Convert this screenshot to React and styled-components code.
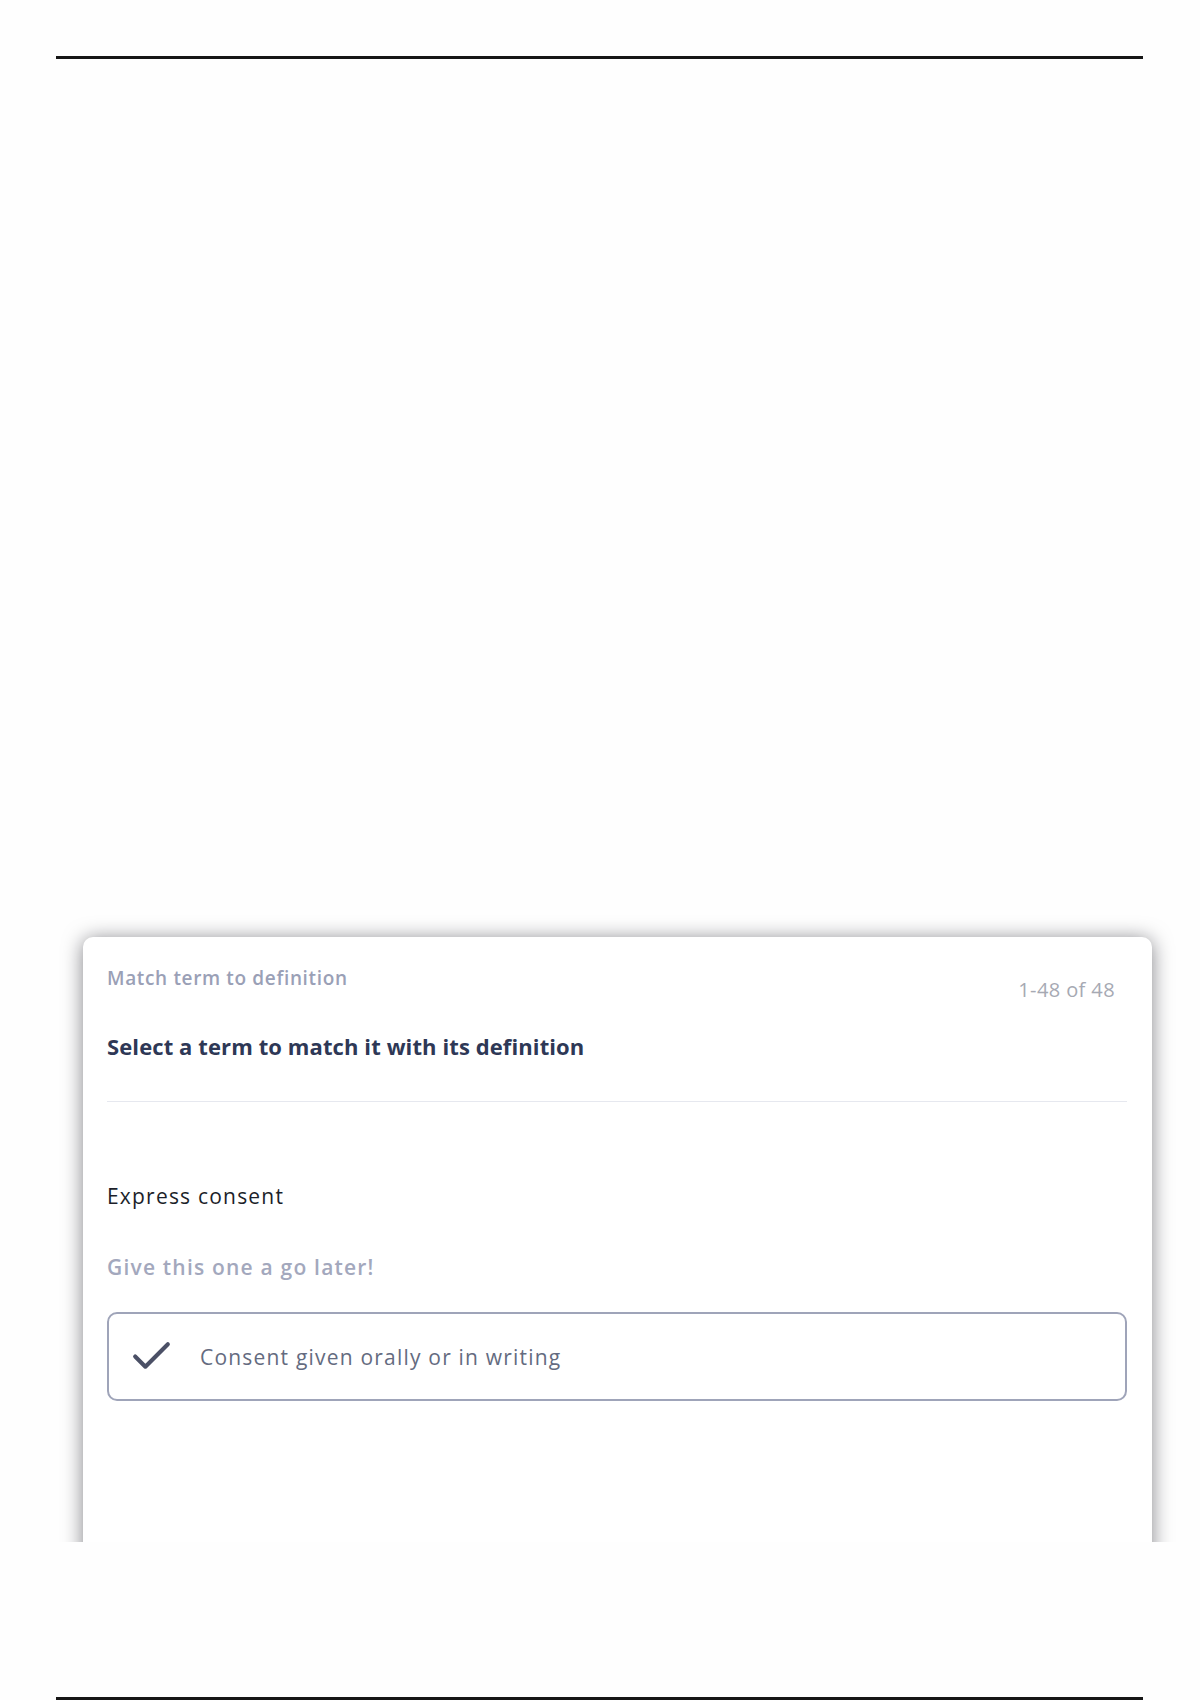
import styled, { createGlobalStyle } from "styled-components";
import { Check } from "lucide-react";

const GlobalStyle = createGlobalStyle`
  body {
    margin: 0;
    background: #fefefe;
    font-family: "Open Sans", Lato, "Liberation Sans", sans-serif;
  }
`;

const App = () => {
  return (
    <Page>
      <GlobalStyle />
      <Rule />
      <CardClip>
        <Card>
          <Header>
            <Kicker>Match term to definition</Kicker>
            <Counter>1-48 of 48</Counter>
          </Header>
          <Prompt>Select a term to match it with its definition</Prompt>
          <Divider />
          <Term>Express consent</Term>
          <Hint>Give this one a go later!</Hint>
          <Option>
            <CheckIcon>
              <Check size={49} strokeWidth={2} />
            </CheckIcon>
            <OptionText>Consent given orally or in writing</OptionText>
          </Option>
        </Card>
      </CardClip>
      <Rule bottom />
    </Page>
  );
};

const Page = styled.div`
  display: flex;
  flex-direction: column;
  height: 1700px;
  overflow: hidden;
`;

const Rule = styled.div`
  margin: ${(props) => (props.bottom ? "155px 57px 0 56px" : "56px 57px 0 56px")};
  height: 3px;
  background: #161616;
`;

const CardClip = styled.div`
  margin: 848px 0 0 53px;
  width: 1129px;
  height: 635px;
  padding: 30px 30px 0;
  box-sizing: border-box;
  overflow: hidden;
`;

const Card = styled.div`
  height: 720px;
  padding: 30px 25px 0 24px;
  background: #ffffff;
  border-radius: 10px;
  box-shadow: 0 2px 20px rgba(10, 10, 20, 0.5);
`;

const Header = styled.div`
  display: flex;
  justify-content: space-between;
  align-items: flex-start;
`;

const Kicker = styled.div`
  font-size: 19px;
  line-height: 22px;
  font-weight: 600;
  letter-spacing: 0.65px;
  color: #9aa0b6;
`;

const Counter = styled.div`
  margin: 11px 12px 0 0;
  font-size: 20px;
  line-height: 24px;
  letter-spacing: 0.4px;
  color: #a6a9b3;
`;

const Prompt = styled.div`
  margin-top: 31px;
  font-size: 22px;
  line-height: 26px;
  font-weight: 700;
  letter-spacing: 0.1px;
  color: #2e3856;
`;

const Divider = styled.div`
  margin-top: 42px;
  height: 1px;
  background: #e6e8ef;
`;

const Term = styled.div`
  margin-top: 81px;
  font-size: 21px;
  line-height: 26px;
  letter-spacing: 1.2px;
  color: #1c1f2a;
`;

const Hint = styled.div`
  margin-top: 45px;
  font-size: 21px;
  line-height: 26px;
  font-weight: 600;
  letter-spacing: 1.2px;
  color: #a3a8bd;
`;

const Option = styled.div`
  margin-top: 32px;
  height: 89px;
  box-sizing: border-box;
  display: flex;
  align-items: center;
  gap: 24px;
  padding-left: 18px;
  border: 2px solid #9fa4b9;
  border-radius: 10px;
`;

const CheckIcon = styled.span`
  display: flex;
  color: #4b5066;
`;

const OptionText = styled.span`
  font-size: 21px;
  letter-spacing: 1.2px;
  color: #646b80;
`;

export default App;
